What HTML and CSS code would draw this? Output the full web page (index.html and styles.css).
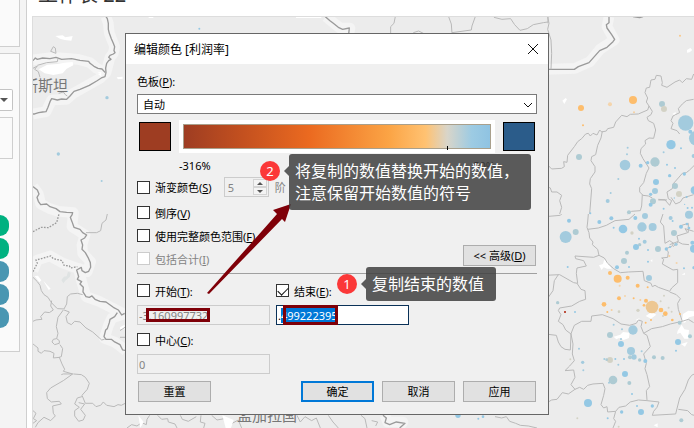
FILE: index.html
```
<!DOCTYPE html>
<html lang="zh-CN">
<head>
  <meta charset="UTF-8">
  <meta name="viewport" content="width=device-width, initial-scale=1.0">
  <title>编辑颜色</title>
  <link rel="stylesheet" href="styles.css">
</head>
<body>
  <div class="workbook">
    <aside class="sidebar">
      <div class="card card-top"></div>
      <div class="card card-marks">
        <button class="mark-type" aria-label="标记类型"><span class="caret"></span></button>
        <div class="mark-box"></div>
        <div class="pills">
          <span class="pill green"></span>
          <span class="pill green"></span>
          <span class="pill blue"></span>
          <span class="pill blue"></span>
          <span class="pill blue"></span>
        </div>
      </div>
    </aside>

    <main class="sheet">
      <h1 class="sheet-title">工作表 22</h1>
      <svg class="map" viewBox="33 17 661 411" preserveAspectRatio="xMinYMin slice">
        <!-- west -->
        <g transform="scale(.3333)">
          <g class="halo">
            <path d="M318 50L325 70L328 100L344 140L340 160L330 172L318 218L300 235L220 280L200 298L155 300L138 335L99 342"/>
            <path d="M99 180L160 172L235 178L270 188L290 205L316 218"/>
            <path d="M99 560L115 582L122 612L150 626L175 634L220 638L216 680L255 705L246 735L248 760L272 785L262 815L235 805L245 845L258 890L300 905L372 942"/>
            <path d="M99 812L112 780L150 768L190 790L232 805"/>
            <path d="M372 942L335 955L325 978L313 1015L345 1027L378 1052"/>
          </g>
          <g class="land">
            <path d="M166 108l22-2 8 6 22-4-4 14-20-2-14-4zM116 208l26-14 30-2 22-4 24-2 2 10-20 10-12 14-28 5-26-5zM99 182l8-2v4zM292 218l12-3v8zM294 222h10v8zM350 232l18-2v6l-14 2zM104 828l10-1 10 14-6 6zM130 842l22 24-6 4zM360 982l14-8v14l-14-1z"/>
            <path class="lake" d="M180 852l8-10 8-1 4-14 8 3-2 12-14 12-6 8z" transform="translate(4 -12)"/>
          </g>
          <g class="border-main">
            <path d="M318 50L322 56L325 70L325 88L328 100L334 116L340 130L344 140L342 152L345 158L340 162L330 166L326 172L333 178L326 182L320 190L317 204L318 218L315 230L304 234L290 243L268 256L240 268L222 274L210 288L200 298L185 297L172 300L155 296L150 305L144 322L138 335L128 336L116 338L104 342L99 342"/>
            <path d="M99 182L106 174L112 178L128 174L150 176L168 172L185 178L215 176L240 181L266 184L270 190L282 199L294 205L306 207L316 218"/>
            <path d="M99 560L112 570L117 582L111 592L115 604L122 614L140 612L150 620L168 626L180 635L200 637L218 638L216 645L211 652L216 665L222 682L240 688L248 698L260 705L254 714L243 720L248 735L246 748L256 758L264 772L271 788L272 802L266 814L256 818L246 812L244 802L230 810L236 830L232 838L245 845L240 852L250 862L249 876L258 890L268 892L276 888L285 898L300 904L318 906L340 922L355 930L365 945L374 940"/>
            <path d="M352 938L344 950L330 958L328 968L322 986L317 990L312 1010L318 1018L334 1018L344 1026L360 1034L368 1050L378 1052"/>
            <path class="dashed" d="M99 695L124 682L145 683L170 668L177 642M99 815L112 790L108 780L124 776L152 768L160 776L186 782L192 796L208 798L212 804L232 800"/>
          </g>
          <g class="border-sub">
            <path d="M160 140l-8 14 16 6-2-16zM99 205L112 198L104 208L115 215L120 232M112 196L140 188L172 185L174 176M176 280L190 276L196 284L202 288"/>
            <path d="M322 642L318 660L306 670L302 692L290 698L258 698"/>
            <path d="M99 832L112 845L120 856L124 872L132 884L144 892L152 905L158 912L172 926L192 927L200 912L202 890L212 882L232 880L248 884"/>
            <path d="M155 902L152 918L160 930L148 938L134 936L122 950L126 958L108 960L99 964"/>
            <path d="M190 930L174 952L169 980L174 1000L170 1016L160 1018L156 1026L164 1034L178 1030L178 1022L170 1016M180 1034L188 1046L184 1070L178 1072L186 1092L194 1108L190 1114L218 1122L190 1122L184 1124M192 930L208 936L198 950L202 968L214 974L224 964L240 966L258 984L278 996L305 1020L314 1018"/>
            <path d="M99 1032L114 1044L114 1054L124 1060L132 1052L150 1054L162 1060L160 1074L180 1072"/>
            <path d="M218 1122L190 1142L152 1164L140 1178L142 1196L154 1206L178 1204L184 1212L158 1218L160 1240L166 1248L152 1262L132 1252L114 1268L106 1282M220 1122L244 1124L256 1132L268 1150L262 1168L246 1186L256 1210L278 1210L288 1220L302 1216L310 1206L320 1216L342 1220L354 1214L364 1216L376 1210"/>
            <path d="M246 1190L232 1194L224 1212L238 1222L224 1232L224 1248L236 1264L250 1260L256 1246L242 1228L254 1212L236 1208M99 1232L108 1240L100 1256L110 1262L99 1270M360 1012h16M378 980l-18 12"/>
          </g>
          <g class="dot-pale">
            <circle cx="321" cy="293" r="5"/><circle cx="175" cy="462" r="5"/><circle cx="305" cy="543" r="3"/>
          </g>
        </g>
        <!-- strip over the dialog -->
        <g transform="translate(120 0) scale(.3333)">
          <path class="halo" d="M618 50L660 84L690 84L686 104"/>
          <path class="border-main" d="M616 50L630 62L640 70L655 82L668 88L688 84L686 104"/>
          <path class="border-sub" d="M826 50L822 70L812 80L812 102M986 50L994 72L996 98L1054 90L1056 78L1066 50M996 98v6M1122 52L1146 58L1172 56L1184 74L1200 91L1222 86L1240 74L1270 68L1284 66M880 98l16-5 16 8M1284 50v20"/>
          <circle class="dot-blue" cx="238" cy="86" r="3"/>
          <path class="land" d="M86 50h14v4H86zM528 50h76v4h-76z"/>
        </g>
        <!-- south -->
        <g transform="translate(125 270) scale(.3333)">
          <path class="border-sub" d="M6 474L20 464L36 468L50 458L64 464L66 448L74 436M98 436L110 448L128 446L130 456L150 462L156 474M166 436L172 448L190 454L214 440M228 436L226 456L240 460L236 474M260 436L276 450L298 446L318 462L340 450L350 474M516 436L526 456L540 440L560 452L574 444L586 474M610 436L624 456L640 474"/>
          <path class="land" d="M40 436l16 20-10 18zM292 436l34 14-8 24h-16z"/>
        </g>
        <g transform="translate(335 270) scale(.3333)">
          <path class="halo" d="M150 436L158 456L204 456L190 474"/>
          <path class="border-main" d="M144 436L154 444L150 458L164 464L184 456L210 460L194 474"/>
          <path class="border-sub" d="M78 436L90 446L96 474M110 452L128 456L122 468M480 440L500 444L514 440L524 454L542 460L556 466L580 468L606 474"/>
          <g class="dot-blue"><circle cx="369" cy="436" r="8"/><circle cx="430" cy="446" r="3"/><circle cx="444" cy="440" r="4"/></g>
        </g>
        <!-- east, upper half -->
        <g transform="translate(545 0) scale(.3333)">
          <path class="halo" d="M0 208L90 205L135 185L165 148L208 120L186 80L192 50"/>
          <path class="border-main" d="M0 208H88L100 200L132 188L148 170L164 152L186 142L204 125L209 118L200 104L186 84L184 74L192 68L192 50M264 50l20 3 10-3"/>
          <g class="land">
            <path d="M52 302l10-8 4 4-8 14zM426 150l10-6 6 6-8 7-8 1zM382 342l10-6v12z"/>
          </g>
          <g class="border-sub">
            <path d="M8 50L12 70L8 88L18 120L20 160L18 208M0 498L10 497L20 507L50 505L58 500L56 485L66 487L68 466L88 440L98 425L110 416L122 402L130 400L136 408L144 400L156 405L164 390L170 396L184 393L188 386L206 382L212 366L230 346L246 350L256 343L280 342L308 330L312 318L304 306L308 294L300 278L304 264L314 262L318 240L330 238L334 226L348 228L352 248L350 256L366 262L390 246L404 240L412 248L424 236L440 238L446 222"/>
            <path d="M312 318L322 334L318 344L306 352L310 362L326 370L332 390L326 415L312 414L300 422L302 432L288 446L286 460L294 476L312 504L304 520L296 548L284 562L284 576L294 586L310 588L322 594M292 584L290 618L286 632L260 634L248 642"/>
            <path d="M172 394L168 414L158 436L152 464L140 470L138 482L150 500L150 516L136 536L134 552L140 566L134 642M0 558L16 564L20 576L36 576L50 586L44 602L50 622L44 642"/>
            <path d="M446 298L424 302L412 312L400 326L404 338L384 348L378 362L384 370L378 386L396 392L404 402M448 496L434 510L424 518L412 520L400 534L384 552L382 566L366 576L370 596L380 602L374 616L360 600L340 600M378 592L392 612L406 606L414 594L446 584M340 598L366 600"/>
          </g>
          <g class="dot-orange"><circle cx="108" cy="324" r="9"/><circle cx="264" cy="300" r="12"/><circle cx="195" cy="313" r="6" opacity=".5"/><circle cx="114" cy="376" r="3"/><circle cx="267" cy="337" r="3" opacity=".6"/><circle cx="405" cy="107" r="3" opacity=".8"/></g>
          <g class="dot-grey"><circle cx="351" cy="312" r="9"/><circle cx="102" cy="471" r="9"/><circle cx="330" cy="486" r="14"/><circle cx="390" cy="558" r="9"/><circle cx="324" cy="604" r="9"/><circle cx="252" cy="637" r="6"/></g>
          <g class="dot-sand"><circle cx="357" cy="327" r="9"/><circle cx="402" cy="582" r="9"/></g>
          <g class="dot-pale"><circle cx="422" cy="369" r="23"/><circle cx="240" cy="495" r="16"/><circle cx="330" cy="573" r="9"/><circle cx="454" cy="415" r="22"/><circle cx="248" cy="443" r="3"/><circle cx="246" cy="463" r="3"/><circle cx="356" cy="457" r="3"/><circle cx="188" cy="603" r="6"/><circle cx="446" cy="468" r="6"/><circle cx="220" cy="537" r="3"/><circle cx="197" cy="579" r="3"/></g>
          <g class="dot-blue"><circle cx="378" cy="434" r="14"/><circle cx="287" cy="497" r="6"/><circle cx="308" cy="488" r="5"/><circle cx="333" cy="546" r="9"/><circle cx="317" cy="583" r="5"/><circle cx="317" cy="614" r="6"/><circle cx="408" cy="445" r="3"/><circle cx="366" cy="494" r="3"/><circle cx="390" cy="504" r="3"/><circle cx="374" cy="527" r="5"/><circle cx="418" cy="522" r="5"/><circle cx="449" cy="571" r="12"/><circle cx="425" cy="591" r="3"/><circle cx="419" cy="613" r="2"/><circle cx="388" cy="594" r="2"/><circle cx="356" cy="626" r="3"/><circle cx="428" cy="624" r="3"/><circle cx="441" cy="623" r="3"/><circle cx="136" cy="640" r="3"/><circle cx="436" cy="395" r="6"/></g>
        </g>
        <!-- east, lower half -->
        <g transform="translate(545 214) scale(.3333)">
          <g class="land">
            <path d="M162 154l12-4 4-14 10 8 12 20-14 0-10-4-6 8zM206 368l20-6 8-8 20 2-2 16-16 6-14-6-8 4zM272 318l12-6-4 10zM302 306l18-12 14 8-16 12zM414 300l16-10 18 2v14l-16 4-12 16-10-2zM398 350l12-18 8 14 14 2-2 26-12 0-12-18-10 4zM408 390l20-6-8 14zM316 140l6-4v8zM326 634l12-6v12zM410 182l10-6v6z"/>
          </g>
          <g class="border-sub">
            <path d="M0 8L46 4L50 0M130 0L128 24L126 40L132 56L134 72L144 84L142 92L158 106L162 124L146 130L90 126L92 134L116 140L124 156L96 162L94 178L98 208L86 206L44 182L0 184M128 46L160 42L184 34L210 20L252 16L270 0"/>
            <path d="M162 124L178 132L188 148L206 164L226 176L250 174L294 172L298 200L318 208L322 218L330 214L340 220L374 232L380 222L398 206L398 166L384 168L352 150L356 136L350 132L368 130L370 114L362 104L380 98L386 88L374 80L360 88L356 36L346 24L354 0M384 98L400 84L412 90L432 92M374 234L394 242L406 254L398 268L400 286L408 310L412 322L376 330L352 338L320 344L296 358L288 338L292 322L280 318L274 328L254 334L228 330L204 314L172 302L140 306L138 322L110 322L88 334L80 354L78 360"/>
            <path d="M96 208L108 226L120 230L122 256L104 262L80 276L44 282L40 290L48 302L40 322L54 332L62 348L78 360L76 408L60 406L48 398L40 384L34 364L0 360M40 182L28 200L24 230L0 264"/>
            <path d="M78 360L84 390L82 420L88 440L74 456L60 470L86 468L90 490L78 512L90 526L70 540L52 536L36 556L20 558L0 570M90 526L104 520L116 526L128 514L144 510L174 508L180 524L176 544L168 572L176 582L186 578L188 594L212 592L222 580L242 576L256 564L280 558L306 560L342 564L336 580L326 592L322 604L392 600L398 576L404 552L420 526L430 498L440 484L448 480"/>
            <path d="M212 592L206 614L212 622L204 642M296 358L306 364L316 398L296 420L304 448L300 464L306 482L314 518L304 530L306 558M400 586L428 590L440 602L448 604M446 326L430 316L412 322M374 92L400 82L396 66L428 56L420 44L446 52M410 34L430 28L430 56"/>
          </g>
          <g class="dot-orange"><circle cx="218" cy="194" r="12"/><circle cx="195" cy="177" r="6"/><circle cx="248" cy="191" r="6"/><circle cx="278" cy="215" r="6"/><circle cx="222" cy="253" r="6"/><circle cx="177" cy="271" r="7"/><circle cx="303" cy="260" r="6"/><circle cx="348" cy="288" r="7"/><circle cx="361" cy="299" r="7"/><circle cx="266" cy="253" r="3"/><circle cx="308" cy="220" r="3"/><circle cx="187" cy="294" r="3"/><circle cx="200" cy="288" r="3" opacity=".6"/><circle cx="297" cy="274" r="4"/><circle cx="302" cy="326" r="3"/><circle cx="318" cy="318" r="3"/><circle cx="382" cy="318" r="4"/><circle cx="405" cy="300" r="3"/><circle cx="224" cy="215" r="3" opacity=".5"/><circle cx="240" cy="246" r="3" opacity=".5"/><circle cx="286" cy="258" r="3" opacity=".6"/><circle cx="373" cy="126" r="3" opacity=".6"/><circle cx="395" cy="147" r="3" opacity=".5"/></g>
          <circle cx="321" cy="279" r="19" fill="#edc792"/>
          <path d="M57 291h6v6h-6z" fill="#bd5140"/>
          <g class="dot-sand"><circle cx="195" cy="438" r="9"/><circle cx="279" cy="289" r="5"/><circle cx="222" cy="293" r="4"/><circle cx="261" cy="57" r="5"/><circle cx="357" cy="245" r="3"/><circle cx="371" cy="281" r="3"/><circle cx="347" cy="262" r="3"/><circle cx="380" cy="293" r="3"/><circle cx="354" cy="306" r="3"/><circle cx="76" cy="436" r="3"/><circle cx="97" cy="613" r="3"/><circle cx="221" cy="638" r="3"/></g>
          <g class="dot-grey"><circle cx="92" cy="54" r="9"/><circle cx="339" cy="105" r="9"/><circle cx="246" cy="116" r="6"/><circle cx="237" cy="141" r="9"/><circle cx="195" cy="363" r="9"/><circle cx="204" cy="498" r="13"/><circle cx="38" cy="266" r="5"/><circle cx="253" cy="507" r="6"/><circle cx="284" cy="438" r="5"/><circle cx="327" cy="430" r="6"/><circle cx="353" cy="432" r="6"/><circle cx="409" cy="619" r="6"/><circle cx="404" cy="326" r="6"/><circle cx="435" cy="367" r="6"/><circle cx="387" cy="57" r="9"/><circle cx="284" cy="92" r="5"/><circle cx="185" cy="437" r="4"/><circle cx="255" cy="430" r="6"/></g>
          <g class="dot-pale"><circle cx="62" cy="69" r="18"/><circle cx="291" cy="39" r="14"/><circle cx="323" cy="39" r="12"/><circle cx="264" cy="348" r="14"/><circle cx="258" cy="411" r="12"/><circle cx="312" cy="192" r="9"/><circle cx="267" cy="429" r="8"/><circle cx="299" cy="83" r="6"/><circle cx="300" cy="6" r="9"/><circle cx="432" cy="2" r="12"/><circle cx="113" cy="445" r="5"/><circle cx="115" cy="469" r="3"/><circle cx="102" cy="404" r="3"/><circle cx="231" cy="346" r="3"/><circle cx="206" cy="332" r="3"/><circle cx="220" cy="452" r="3"/><circle cx="377" cy="12" r="6"/><circle cx="393" cy="91" r="5"/><circle cx="178" cy="435" r="3"/><circle cx="290" cy="412" r="3"/><circle cx="192" cy="506" r="3"/><circle cx="228" cy="375" r="3"/></g>
          <g class="dot-blue"><circle cx="234" cy="45" r="13"/><circle cx="163" cy="24" r="6"/><circle cx="199" cy="13" r="6"/><circle cx="271" cy="12" r="6"/><circle cx="273" cy="99" r="9"/><circle cx="72" cy="20" r="6"/><circle cx="216" cy="160" r="6"/><circle cx="252" cy="159" r="3"/><circle cx="228" cy="390" r="9"/><circle cx="240" cy="480" r="9"/><circle cx="129" cy="567" r="12"/><circle cx="288" cy="594" r="9"/><circle cx="230" cy="594" r="5"/><circle cx="322" cy="576" r="5"/><circle cx="188" cy="613" r="3"/><circle cx="301" cy="441" r="6"/><circle cx="399" cy="384" r="9"/><circle cx="393" cy="410" r="3"/><circle cx="447" cy="104" r="12"/><circle cx="442" cy="86" r="6"/><circle cx="408" cy="38" r="6"/><circle cx="364" cy="105" r="5"/><circle cx="309" cy="108" r="3"/><circle cx="309" cy="143" r="3"/><circle cx="282" cy="74" r="3"/><circle cx="206" cy="41" r="3"/><circle cx="68" cy="159" r="3"/><circle cx="90" cy="294" r="3"/><circle cx="447" cy="161" r="5"/><circle cx="417" cy="163" r="3"/><circle cx="261" cy="540" r="3"/><circle cx="276" cy="576" r="3"/><circle cx="237" cy="435" r="3"/><circle cx="211" cy="435" r="3"/><circle cx="383" cy="21" r="3"/><circle cx="426" cy="30" r="4"/><circle cx="432" cy="42" r="4"/><circle cx="375" cy="99" r="3"/></g>
        </g>
        <text class="map-label" x="23" y="91">斯斯坦</text>
        <text class="map-label" x="237" y="421">孟加拉国</text>
      </svg>
    </main>
  </div>

  <form class="dialog" onsubmit="return false">
    <header class="dialog-title">
      <span>编辑颜色 [利润率]</span>
      <button type="button" class="close" aria-label="关闭">
        <svg viewBox="0 0 12 12" width="12" height="12"><path d="M1 1L11 11M11 1L1 11"/></svg>
      </button>
    </header>

    <div class="dialog-body">
      <label class="palette-label" for="palette">色板(<u>P</u>):</label>
      <div class="select-wrap">
        <select id="palette"><option>自动</option></select>
        <svg class="chevron" viewBox="0 0 10 6" width="10" height="6"><path d="M1 1L5 5L9 1"/></svg>
      </div>

      <div class="ramp-row">
        <button type="button" class="swatch swatch-start" aria-label="开始颜色"></button>
        <div class="ramp-panel"><div class="ramp"><span class="tick"></span></div></div>
        <button type="button" class="swatch swatch-end" aria-label="结束颜色"></button>
      </div>
      <div class="ramp-values"><span>-316%</span><span>50%</span></div>

      <div class="options">
        <div class="check-row step-row">
          <input type="checkbox" id="stepped"><label for="stepped">渐变颜色(<u>S</u>)</label>
          <div class="spinner">
            <input type="text" id="steps" value="5" disabled>
            <div class="spin-buttons">
              <button type="button" disabled aria-label="增加"><span class="up"></span></button>
              <button type="button" disabled aria-label="减少"><span class="down"></span></button>
            </div>
          </div>
          <label class="muted" for="steps">阶</label>
        </div>
        <div class="check-row"><input type="checkbox" id="reversed"><label for="reversed">倒序(<u>V</u>)</label></div>
        <div class="check-row"><input type="checkbox" id="full"><label for="full">使用完整颜色范围(<u>F</u>)</label></div>
        <div class="check-row last-row">
          <input type="checkbox" id="totals" disabled><label class="muted" for="totals">包括合计(<u>I</u>)</label>
          <button type="button" class="btn advanced">&lt;&lt; 高级(<u>D</u>)</button>
        </div>
      </div>

      <div class="range">
        <div class="field">
          <div class="check-row"><input type="checkbox" id="use-start"><label for="use-start">开始(<u>T</u>):</label></div>
          <input type="text" class="value" value="-3.160997732" aria-label="开始" disabled>
        </div>
        <div class="field">
          <div class="check-row"><input type="checkbox" id="use-end" checked><label for="use-end">结束(<u>E</u>):</label></div>
          <input type="text" class="value" id="end-value" value=".499222395" aria-label="结束">
        </div>
        <div class="field">
          <div class="check-row"><input type="checkbox" id="use-center"><label for="use-center">中心(<u>C</u>):</label></div>
          <input type="text" class="value" value="0" aria-label="中心" disabled>
        </div>
      </div>

      <footer class="actions">
        <button type="button" class="btn reset">重置</button>
        <button type="submit" class="btn primary">确定</button>
        <button type="button" class="btn">取消</button>
        <button type="button" class="btn">应用</button>
      </footer>
    </div>

    <!-- annotations -->
    <span class="frame frame-start"></span>
    <span class="frame frame-end"></span>
    <svg class="arrow" viewBox="0 0 90 96" width="90" height="96"><path d="M3 92L73 13L69 9L87 3L81 21L78 18L5 93Z"/></svg>
    <div class="note note-two">
      <span class="badge">2</span>
      <p class="bubble">将复制的数值替换开始的数值，<br>注意保留开始数值的符号</p>
    </div>
    <div class="note note-one">
      <span class="badge">1</span>
      <p class="bubble">复制结束的数值</p>
    </div>
  </form>

  <script>
    const end = document.getElementById('end-value');
    end.focus();
    end.setSelectionRange(1, end.value.length);
  </script>
</body>
</html>
```
FILE: styles.css
```
* {
  box-sizing: border-box;
}

body {
  margin: 0;
  position: relative;
  background-color: #fff;
  font-family: "Noto Sans", "Noto Sans CJK SC", sans-serif;
  font-size: 11px;
  color: #000;
  overflow: hidden;
}

button,
input,
select {
  margin: 0;
  padding: 0;
  font: inherit;
  color: inherit;
}

.workbook {
  display: flex;
  height: 100vh;
}

/* sidebar */
.sidebar {
  flex: 0 0 27px;
  display: flex;
  flex-direction: column;
  gap: 6px;
  padding-right: 6px;
  background-color: #f4f4f4;
  border-right: 1px solid #cfcfcf;
}

.card {
  background-color: #fafafa;
  border: 1px solid #cfcfcf;
  border-left: none;
}

.card-top {
  height: 47px;
  border-top: none;
}

.card-marks {
  display: flex;
  flex-direction: column;
  align-items: flex-start;
  height: 299px;
  padding-top: 35px;
}

.mark-type {
  display: flex;
  align-items: center;
  width: 13px;
  height: 22px;
  background-color: #fff;
  border: 1px solid #c4c4c4;
  border-left: none;
  border-radius: 0 2px 2px 0;
}

.caret {
  border: 4px solid transparent;
  border-top-color: #555;
  border-bottom: none;
}

.mark-box {
  width: 13px;
  height: 42px;
  margin-top: 6px;
  border: 1px solid #cfcfcf;
  border-left: none;
}

.pills {
  display: flex;
  flex-direction: column;
  gap: 2px;
  margin-top: 56px;
}

.pill {
  width: 9px;
  height: 21px;
  border-radius: 0 10px 10px 0;
}

.green {
  background-color: #00b180;
}

.blue {
  background-color: #4996b2;
}

/* sheet */
.sheet {
  flex: 1;
  min-width: 0;
  display: flex;
  flex-direction: column;
  padding-left: 5px;
}

.sheet-title {
  display: flex;
  align-items: flex-end;
  height: 16px;
  margin: 0;
  padding: 0 6px 11px;
  font-size: 20px;
  font-weight: 400;
  line-height: 20px;
  color: #333;
}

.map {
  flex: 1;
  min-height: 0;
  width: 100%;
  background-color: #ececec;
  border-top: 1px solid #ddd;
  border-left: 1px solid #ddd;
}

.map path {
  stroke-linejoin: round;
}

.halo {
  fill: none;
  stroke: #f4f4f4;
  stroke-width: 32;
}

.land {
  fill: #fff;
}

.lake {
  fill: #dfe3e3;
}

.border-main {
  fill: none;
  stroke: #9a9a9a;
  stroke-width: 4;
}

.border-sub {
  fill: none;
  stroke: #b9b9b9;
  stroke-width: 3;
}

.dashed {
  stroke-dasharray: 5 4;
}

.dot-blue {
  fill: #94c8e4;
}

.dot-pale {
  fill: #a3cbde;
}

.dot-grey {
  fill: #aecbd3;
}

.dot-sand {
  fill: #d3d2c5;
}

.dot-orange {
  fill: #fdbd6c;
}

.map-label {
  font-size: 15px;
  fill: #777;
}

/* dialog */
.dialog {
  position: absolute;
  left: 125px;
  top: 33px;
  width: 424px;
  background-color: #f0f0f0;
  border: 1px solid #666;
}

.dialog-title {
  display: flex;
  align-items: center;
  justify-content: space-between;
  height: 30px;
  padding: 0 9px 0 8px;
  background-color: #fff;
  font-size: 12px;
}

.close {
  display: flex;
  border: none;
  background: none;
}

.close path,
.chevron path {
  fill: none;
  stroke: #111;
}

.dialog-body {
  display: flex;
  flex-direction: column;
  padding: 10px 11px 12px;
}

.palette-label {
  line-height: 16px;
}

.select-wrap {
  position: relative;
  margin-top: 4px;
}

.select-wrap select {
  display: block;
  width: 100%;
  height: 20px;
  padding: 0 5px;
  appearance: none;
  background-color: #fff;
  border: 1px solid #7a7a7a;
  border-radius: 0;
}

.chevron {
  position: absolute;
  right: 4px;
  top: 8px;
}

.ramp-row {
  display: flex;
  align-items: center;
  gap: 8px;
  margin-top: 6px;
  padding: 0 2px;
}

.swatch {
  width: 32px;
  height: 29px;
  border: 1px solid #000;
}

.swatch-start {
  background-color: #9e3d22;
}

.swatch-end {
  background-color: #2b5c8a;
}

.ramp-panel {
  flex: 1;
  padding: 4px;
  background-color: #fff;
}

.ramp {
  position: relative;
  height: 25px;
  border: 1px solid #a9a08c;
  background: linear-gradient(to right, #9e3d22 0%, #c3501f 19%, #eb6a20 41%, #fba445 67%, #ffc272 79%, #d9d5c9 86%, #9dcbe3 94%, #8fc3e2 100%);
}

.tick {
  position: absolute;
  left: 86%;
  bottom: -2px;
  width: 1px;
  height: 4px;
  background-color: #000;
}

.ramp-values {
  display: flex;
  justify-content: space-between;
  margin-top: 5px;
  padding: 0 42px;
  line-height: 16px;
}

.options {
  display: flex;
  flex-direction: column;
  gap: 2px;
  padding-bottom: 4px;
  border-bottom: 1px solid #a0a0a0;
}

.check-row {
  display: flex;
  align-items: center;
  height: 21px;
}

.step-row {
  height: 26px;
}

.check-row input[type="checkbox"] {
  flex: none;
  width: 13px;
  height: 13px;
  margin-right: 5px;
  appearance: none;
  background-color: #fff;
  border: 1px solid #333;
}

.check-row input[type="checkbox"]:disabled {
  border-color: #ccc;
}

.check-row input[type="checkbox"]:checked::before {
  content: "";
  display: block;
  width: 9px;
  height: 5px;
  margin: 2px 1px;
  border-left: 1px solid #111;
  border-bottom: 1px solid #111;
  transform: rotate(-45deg);
}

.muted {
  color: #838383;
}

.spinner {
  display: flex;
  width: 45px;
  height: 20px;
  margin: 0 6px 0 12px;
  padding: 1px;
  border: 1px solid #ccc;
}

.spinner input {
  flex: 1;
  min-width: 0;
  padding-left: 2px;
  border: none;
  background: none;
  color: #838383;
}

.spin-buttons {
  display: flex;
  flex-direction: column;
  width: 14px;
}

.spin-buttons button {
  display: flex;
  flex: 1;
  align-items: center;
  justify-content: center;
  border: 1px solid #d4d4d4;
  background-color: #f4f4f4;
}

.up,
.down {
  border: 3px solid transparent;
}

.up {
  border-top: none;
  border-bottom-color: #555;
}

.down {
  border-bottom: none;
  border-top-color: #555;
}

.btn {
  width: 73px;
  height: 21px;
  background-color: #e1e1e1;
  border: 1px solid #adadad;
  line-height: 16px;
}

.advanced {
  margin: 0 1px 6px auto;
}

.range {
  display: grid;
  grid-template-columns: 133px 133px;
  column-gap: 6px;
  row-gap: 4px;
  margin-top: 6px;
}

.field {
  display: flex;
  flex-direction: column;
  gap: 4px;
}

.value {
  width: 100%;
  height: 20px;
  padding: 0 1px;
  background-color: #fff;
  border: 1px solid #0a3158;
  outline: none;
}

.value:disabled {
  background-color: #f0f0f0;
  border-color: #ccc;
  color: #838383;
}

.value::selection {
  background-color: #0078d7;
  color: #fff;
}

.actions {
  display: flex;
  gap: 8px;
  margin-top: 7px;
  padding: 0 1px;
}

.reset {
  margin-right: auto;
}

.primary {
  border: 2px solid #0078d7;
}

/* annotations */
.frame {
  position: absolute;
  border: 3px solid #7f0008;
}

.frame-start {
  left: 20px;
  top: 274px;
  width: 64px;
  height: 14px;
}

.frame-end {
  left: 157px;
  top: 271px;
  width: 55px;
  height: 20px;
}

.arrow {
  position: absolute;
  left: 78px;
  top: 167px;
  fill: #7f0008;
}

.note {
  position: absolute;
  display: flex;
  gap: 9px;
}

.note-two {
  left: 134px;
  top: 120px;
}

.note-one {
  left: 211px;
  top: 233px;
}

.badge {
  width: 20px;
  height: 20px;
  margin-top: 7px;
  border-radius: 50%;
  background-color: #fb3838;
  color: #fff;
  font-size: 13px;
  line-height: 20px;
  text-align: center;
}

.bubble {
  position: relative;
  margin: 0;
  padding: 6px 12px 6px 6px;
  border-radius: 3px;
  background-color: rgba(64, 64, 64, 0.85);
  color: #fff;
  font-size: 16px;
  line-height: 22px;
  white-space: nowrap;
}

.bubble::before {
  content: "";
  position: absolute;
  right: 100%;
  top: 12px;
  border: 5px solid transparent;
  border-left: none;
  border-right-color: rgba(64, 64, 64, 0.85);
}
```
